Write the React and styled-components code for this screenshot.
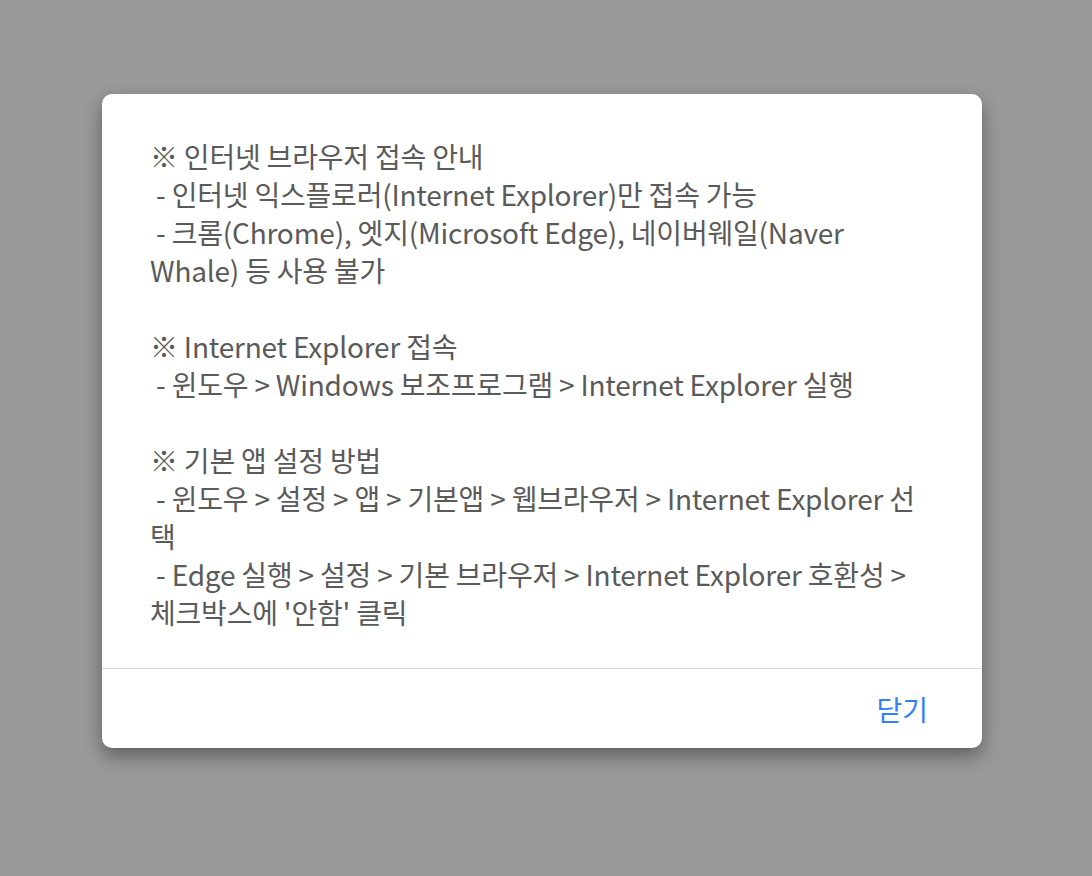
import React from 'react'
import styled, { createGlobalStyle } from 'styled-components'

const GlobalStyle = createGlobalStyle`
    html, body {
        margin: 0;
        padding: 0;
        background: #999999;
    }
    body {
        font-family: "Noto Sans CJK KR", "Noto Sans", sans-serif;
    }
`

const Overlay = styled.div`
    width: 100%;
    height: 876px;
    background-color: #999999;
    display: flex;
    justify-content: center;
    align-items: flex-start;
    padding: 94px 8px 0 0;
    box-sizing: border-box;
`

const Modal = styled.div`
    width: 880px;
    background: #fff;
    border-radius: 10px;
    box-shadow: 0 8px 18px rgba(0, 0, 0, 0.38);
    display: flex;
    flex-direction: column;
    overflow: hidden;
`

const Body = styled.div`
    padding: 43px 48px 37px 48px;
    font-size: 28px;
    line-height: 38px;
    color: #5a5a5a;
    letter-spacing: -0.2px;
`

const Line = styled.div`
    min-height: 38px;
    white-space: pre-wrap;
`

const Footer = styled.div`
    border-top: 1px solid #d6d6d6;
    height: 79px;
    display: flex;
    align-items: center;
    justify-content: flex-end;
    padding: 0 54px;
`

const CloseButton = styled.button`
    background: none;
    border: none;
    padding: 0;
    font-family: inherit;
    font-size: 28px;
    color: #3182f6;
    cursor: pointer;
`

const sections = [
    [
        '※ 인터넷 브라우저 접속 안내',
        ' - 인터넷 익스플로러(Internet Explorer)만 접속 가능',
        ' - 크롬(Chrome), 엣지(Microsoft Edge), 네이버웨일(Naver Whale) 등 사용 불가',
    ],
    [
        '※ Internet Explorer 접속',
        ' - 윈도우 > Windows 보조프로그램 > Internet Explorer 실행',
    ],
    [
        '※ 기본 앱 설정 방법',
        ' - 윈도우 > 설정 > 앱 > 기본앱 > 웹브라우저 > Internet Explorer 선택',
        " - Edge 실행 > 설정 > 기본 브라우저 > Internet Explorer 호환성 > 체크박스에 '안함' 클릭",
    ],
]

function App() {
    return (
        <>
            <GlobalStyle />
            <Overlay>
                <Modal>
                    <Body>
                        {sections.map((lines, i) => (
                            <React.Fragment key={i}>
                                {i > 0 && <Line />}
                                {lines.map((text, j) => (
                                    <Line key={j}>{text}</Line>
                                ))}
                            </React.Fragment>
                        ))}
                    </Body>
                    <Footer>
                        <CloseButton>닫기</CloseButton>
                    </Footer>
                </Modal>
            </Overlay>
        </>
    )
}

export default App
